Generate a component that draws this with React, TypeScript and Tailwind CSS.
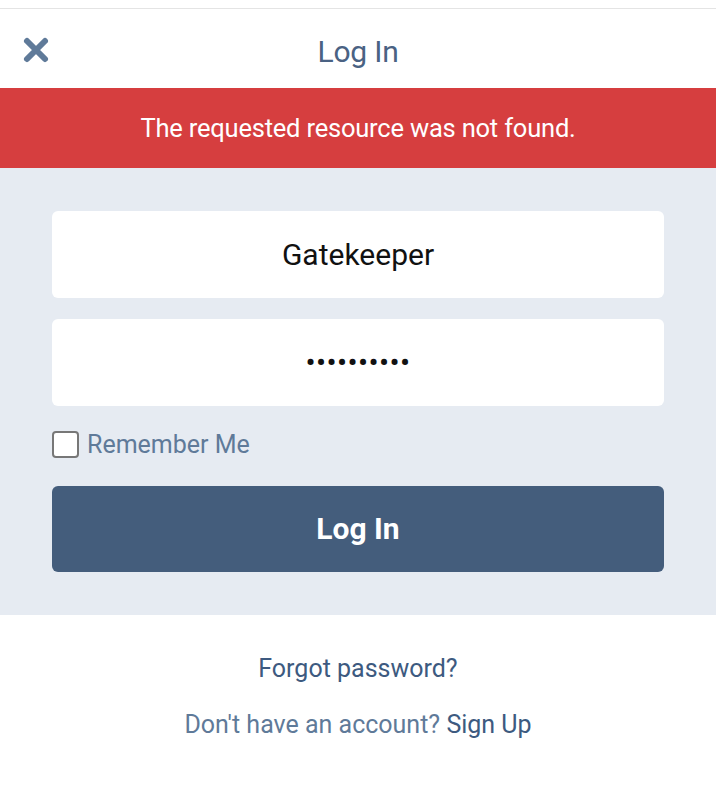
import React from 'react';

const font = { fontFamily: 'Roboto, "Noto Sans", sans-serif' };

export default function App() {
  return (
    <div className="min-h-[800px] w-full bg-white" style={font}>
      {/* top strip */}
      <div className="h-[9px] bg-white border-b border-[#e4e4e4] shadow-[0_1px_2px_rgba(0,0,0,0.06)]" />

      {/* header */}
      <div className="relative flex h-[79px] items-center justify-center bg-white pt-[5px]">
        <button className="absolute left-[22px] top-[27px] text-[#5f7a99]" aria-label="Close">
          <svg width="28" height="28" viewBox="0 0 28 28">
            <path d="M5 5 L23 23 M23 5 L5 23" stroke="currentColor" strokeWidth="6" strokeLinecap="round" />
          </svg>
        </button>
        <h1 className="text-[30px] font-normal text-[#4a6283] tracking-[-0.2px]">Log In</h1>
      </div>

      {/* error banner */}
      <div className="flex h-[80px] items-center justify-center bg-[#d63e3f]">
        <p className="text-[25.5px] text-white tracking-[-0.2px]">The requested resource was not found.</p>
      </div>

      {/* form */}
      <div className="bg-[#e6ebf2] px-[52px] pt-[43px] pb-[43px]">
        <div className="flex flex-col">
          <input
            readOnly
            value="Gatekeeper"
            className="h-[87px] w-full rounded-[6px] bg-white text-center text-[30px] text-[#111] outline-none"
          />
          <input
            readOnly
            type="password"
            value="abcdefghij"
            className="mt-[21px] h-[87px] w-full rounded-[6px] bg-white text-center text-[30px] tracking-[0.4px] text-[#111] outline-none"
          />
          <label className="mt-[20px] flex items-center gap-[8px]">
            <span className="h-[27px] w-[27px] rounded-[4px] border-2 border-[#777] bg-white" />
            <span className="text-[25px] text-[#5f7a99]">Remember Me</span>
          </label>
          <button className="mt-[22px] h-[86px] w-full rounded-[6px] bg-[#445d7c] text-[30px] font-bold text-white">
            Log In
          </button>
        </div>
      </div>

      {/* links */}
      <div className="flex flex-col items-center pt-[35px]">
        <a className="text-[25px] text-[#3d5a80]">Forgot password?</a>
        <p className="mt-[19px] text-[25px] text-[#5f7a99]">
          Don't have an account? <a className="text-[#3d5a80]">Sign Up</a>
        </p>
      </div>
    </div>
  );
}
